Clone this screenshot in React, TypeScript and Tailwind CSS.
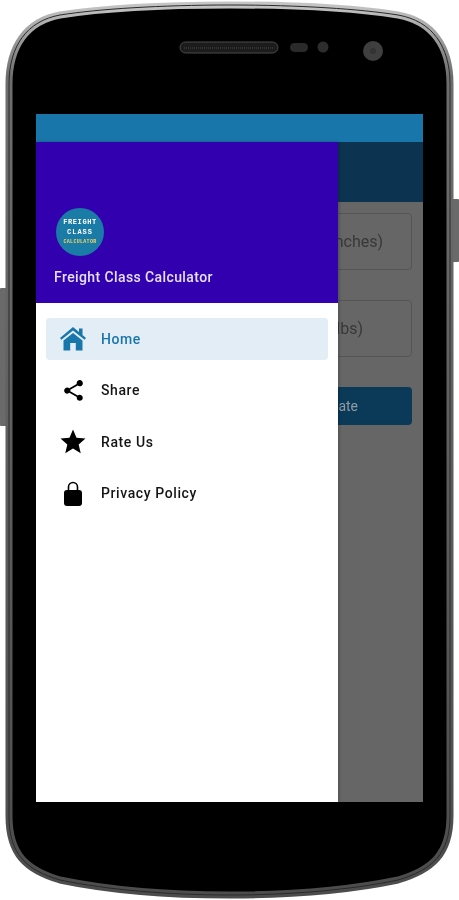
import React from "react";
import { MdShare, MdStar } from "react-icons/md";

const silhouette =
  "M230 5 C300 5 360 9 398 15 C432 21 450 46 450 84 L450 816 C450 854 432 870 398 880 C350 890 290 895 230 895 C170 895 108 890 60 880 C26 870 9 854 9 816 L9 84 C9 46 27 21 60 15 C98 9 160 5 230 5 Z";

// phone shell: body, bezel highlight, speaker and sensors
function PhoneShell() {
  return (
    <svg className="absolute inset-0" width="459" height="900" viewBox="0 0 459 900">
      <defs>
        <linearGradient id="rim" x1="0" y1="0" x2="0" y2="1">
          <stop offset="0" stopColor="#c4c4c4" />
          <stop offset="0.08" stopColor="#6e6e6e" />
          <stop offset="1" stopColor="#4c4c4c" />
        </linearGradient>
      </defs>
      <rect x="0" y="288" width="9" height="138" rx="1" fill="#6a6a6a" />
      <rect x="450" y="199" width="9" height="63" rx="1" fill="#6a6a6a" />
      <path d={silhouette} fill="#000" stroke="url(#rim)" strokeWidth="7" />
      <path d={silhouette} fill="none" stroke="#2a2a2a" strokeWidth="1" />
      <rect x="180" y="42" width="98" height="11" rx="5.5" fill="#1c1c1c" stroke="#4b4b4b" strokeWidth="1" />
      <line x1="184" y1="48" x2="274" y2="48" stroke="#3a3a3a" strokeWidth="1.5" strokeDasharray="1 1" />
      <rect x="290" y="43" width="18" height="9" rx="4.5" fill="#2a2a2a" />
      <circle cx="323" cy="47" r="5.5" fill="#2d2d2d" />
      <circle cx="373" cy="51" r="10" fill="#3f3f3f" />
      <circle cx="373" cy="51" r="3" fill="#333" />
    </svg>
  );
}

function HomeIcon() {
  return (
    <svg width="26" height="24" viewBox="0 0 26 24" fill="#1976ab">
      <path d="M13 0 L19 5 V1.5 H22.5 V8 L26 11 L24.6 12.8 L13 3.4 L1.4 12.8 L0 11 Z" />
      <path d="M13 6 L22.5 13.6 V23.5 H15.8 V16 H10.2 V23.5 H3.5 V13.6 Z" />
    </svg>
  );
}

function LockIcon() {
  return (
    <svg width="18" height="25" viewBox="0 0 18 25">
      <path d="M4.5 11 V6 a4.5 4.5 0 0 1 9 0 V11" fill="none" stroke="#000" strokeWidth="1.6" />
      <rect x="0" y="9" width="18" height="16" rx="3" fill="#000" />
    </svg>
  );
}

function Logo() {
  return (
    <div className="w-12 h-12 rounded-full bg-[#1a7ba6] flex flex-col items-center justify-center font-['Liberation_Mono',monospace] font-bold leading-[10px]">
      <span className="text-[7px] tracking-[0.6px] text-white">FREIGHT</span>
      <span className="text-[7px] tracking-[1px] text-white">CLASS</span>
      <span className="text-[5px] tracking-[0.3px] text-[#f0d66a]">CALCULATOR</span>
    </div>
  );
}

function NavRow({ icon, label, active }: { icon: React.ReactNode; label: string; active?: boolean }) {
  return (
    <div className={`h-[41.5px] rounded flex items-center ${active ? "bg-[#e3edf5] text-[#1976ab]" : "text-[#151515]"}`}>
      <div className="w-[55px] mr-[0.5px] flex justify-center">{icon}</div>
      <span className="text-sm font-medium tracking-[0.6px]">{label}</span>
    </div>
  );
}

export default function App() {
  return (
    <div className="relative w-[459px] h-[900px] bg-white overflow-hidden font-['Roboto',sans-serif] blur-[0.4px]">
      <PhoneShell />
      <div className="relative pt-[114px] pl-9">
        <div className="relative w-[387px] h-[688px] flex flex-col bg-[#666666] overflow-hidden">
          <div className="h-7 bg-[#1976ab]" />
          <div className="h-[60px] bg-[#0c3450]" />

          {/* page behind the drawer */}
          <div className="flex flex-col gap-[30px] px-[11px] pt-[11px] text-[#383838]">
            <div className="h-[57px] rounded border border-[#555555] flex items-center justify-end pr-7 text-base">
              Height (Inches)
            </div>
            <div className="h-[57px] rounded border border-[#555555] flex items-center justify-end pr-12 text-base">
              Weight (lbs)
            </div>
            <div className="h-[38px] rounded bg-[#0b3a59] flex items-center justify-end pr-[54px] text-sm text-[#8f9aa3]">
              Calculate
            </div>
          </div>

          {/* drawer */}
          <div className="absolute top-7 bottom-0 left-0 w-[302px] bg-white flex flex-col shadow-[1px_0_3px_rgba(0,0,0,0.25)]">
            <div className="h-[161px] bg-[#3300b0] flex flex-col pt-[66px] pl-[18px]">
              <div className="ml-[2px]">
                <Logo />
              </div>
              <span className="mt-[11px] text-sm font-medium text-[#e6e0f8] tracking-[0.4px]">Freight Class Calculator</span>
            </div>
            <div className="flex flex-col gap-[10px] pt-[15px] pl-[9.5px] pr-[10px]">
              <NavRow active label="Home" icon={<HomeIcon />} />
              <NavRow label="Share" icon={<MdShare className="text-black" size={25} />} />
              <NavRow label="Rate Us" icon={<MdStar className="text-black" size={30} />} />
              <NavRow label="Privacy Policy" icon={<LockIcon />} />
            </div>
          </div>
        </div>
      </div>
    </div>
  );
}
